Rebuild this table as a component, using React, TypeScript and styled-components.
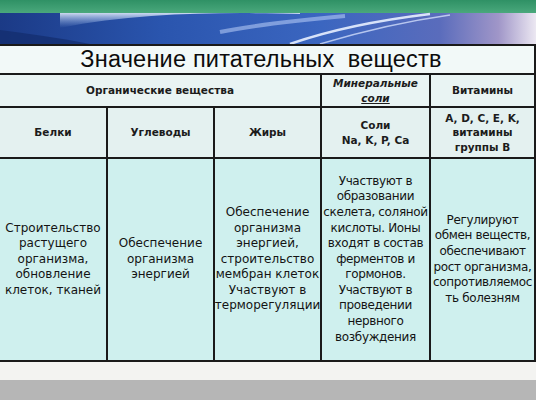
import React from "react"
import styled, { createGlobalStyle } from "styled-components"

type Tone = "title" | "head" | "sub" | "body"

const GlobalStyle = createGlobalStyle`
  html, body {
    margin: 0;
    padding: 0;
    background: #b6b6b6;
  }
  body {
    width: 536px;
    height: 400px;
    overflow: hidden;
    font-family: "DejaVu Sans", "Liberation Sans", sans-serif;
    color: #111;
  }
`

const toneBg: Record<Tone, string> = {
  title: "#f2f9f8",
  head: "#e9f4f3",
  sub: "#e4f1f0",
  body: "#cff0ee",
}

const Banner = () => (
  <S.Banner viewBox="0 0 536 44" width={536} height={44}>
    <defs>
      <linearGradient id="green" x1="0" y1="0" x2="0" y2="1">
        <stop offset="0" stopColor="#2f9165" />
        <stop offset="1" stopColor="#4aa87c" />
      </linearGradient>
      <linearGradient id="blue" x1="0" y1="0" x2="1" y2="0">
        <stop offset="0" stopColor="#1b3a86" />
        <stop offset="0.3" stopColor="#2a55ae" />
        <stop offset="0.6" stopColor="#3b66c0" />
        <stop offset="0.82" stopColor="#5a6cbc" />
        <stop offset="0.93" stopColor="#a096c8" />
        <stop offset="1" stopColor="#ece8f2" />
      </linearGradient>
      <linearGradient id="haze" x1="0" y1="0" x2="0" y2="1">
        <stop offset="0" stopColor="#dfe9f8" stopOpacity="0.9" />
        <stop offset="1" stopColor="#8fb0e6" stopOpacity="0" />
      </linearGradient>
    </defs>
    <rect x="0" y="0" width="536" height="13" fill="url(#green)" />
    <rect x="0" y="13" width="536" height="31" fill="url(#blue)" />
    <path d="M60 28 C 140 12, 230 12, 300 14 L 300 13 L 60 13 Z" fill="url(#haze)" />
    <path d="M0 44 L 0 30 C 30 34, 60 38, 90 44 Z" fill="#132c6c" opacity="0.7" />
    <path d="M290 44 C 330 30, 380 20, 430 14" stroke="#e8f0ff" strokeWidth="2.5" fill="none" opacity="0.9" />
    <path d="M320 44 C 360 32, 400 22, 450 15" stroke="#dbe6ff" strokeWidth="1.5" fill="none" opacity="0.75" />
    <path d="M220 32 C 260 24, 300 20, 345 16" stroke="#c9dbff" strokeWidth="4" fill="none" opacity="0.5" />
  </S.Banner>
)

export default function App() {
  return (
    <S.Page>
      <GlobalStyle />
      <Banner />
      <S.Table>
        <S.Cell $tone="title" $span="1 / -1">
          <S.Title>Значение питательных&nbsp; веществ</S.Title>
        </S.Cell>
        <S.Cell $tone="head" $span="1 / span 3">
          <S.Head>Органические вещества</S.Head>
        </S.Cell>
        <S.Cell $tone="head">
          <S.Head $italic>
            Минеральные
            <br />
            <S.Underline>соли</S.Underline>
          </S.Head>
        </S.Cell>
        <S.Cell $tone="head">
          <S.Head>Витамины</S.Head>
        </S.Cell>

        <S.Cell $tone="sub">
          <S.Head>Белки</S.Head>
        </S.Cell>
        <S.Cell $tone="sub">
          <S.Head>Углеводы</S.Head>
        </S.Cell>
        <S.Cell $tone="sub">
          <S.Head>Жиры</S.Head>
        </S.Cell>
        <S.Cell $tone="sub">
          <S.Head>
            Соли
            <br />
            Na, K, P, Ca
          </S.Head>
        </S.Cell>
        <S.Cell $tone="sub">
          <S.Head>
            A, D, C, E, K,
            <br />
            витамины
            <br />
            группы B
          </S.Head>
        </S.Cell>

        <S.Cell $tone="body">
          <S.Body>
            Строительство<br />растущего<br />организма,<br />обновление<br />клеток, тканей
          </S.Body>
        </S.Cell>
        <S.Cell $tone="body">
          <S.Body>
            Обеспечение<br />организма<br />энергией
          </S.Body>
        </S.Cell>
        <S.Cell $tone="body">
          <S.Body>
            Обеспечение<br />организма<br />энергией,<br />строительство<br />мембран клеток<br />Участвуют в<br />терморегуляции
          </S.Body>
        </S.Cell>
        <S.Cell $tone="body">
          <S.Body $tight>
            Участвуют в<br />образовании<br />скелета, соляной<br />кислоты. Ионы<br />входят в состав<br />ферментов и<br />гормонов.<br />Участвуют в<br />проведении<br />нервного<br />возбуждения
          </S.Body>
        </S.Cell>
        <S.Cell $tone="body">
          <S.Body $tight>
            Регулируют<br />обмен веществ,<br />обеспечивают<br />рост организма,<br />сопротивляемос<br />ть болезням
          </S.Body>
        </S.Cell>
      </S.Table>
      <S.Strip />
    </S.Page>
  )
}

const S = {
  Page: styled.div`
    display: flex;
    flex-direction: column;
    width: 536px;
  `,
  Banner: styled.svg`
    display: block;
  `,
  Table: styled.div`
    display: grid;
    grid-template-columns: 106px 105px 105px 107px 103px;
    grid-template-rows: 27px 31px 49px 201px;
    gap: 2px;
    padding: 2px 2px 2px 0;
    background: #1a1a1a;
  `,
  Cell: styled.div<{ $tone: Tone; $span?: string }>`
    grid-column: ${(p) => p.$span ?? "auto"};
    display: flex;
    align-items: center;
    justify-content: center;
    text-align: center;
    overflow: hidden;
    white-space: nowrap;
    background: ${(p) => toneBg[p.$tone]};
  `,
  Title: styled.div`
    font-family: "Liberation Sans", Arial, sans-serif;
    font-size: 23.5px;
    letter-spacing: 0.2px;
    color: #0c0c0c;
    margin-left: -12px;
  `,
  Head: styled.div<{ $italic?: boolean }>`
    font-size: 10.5px;
    font-weight: bold;
    line-height: 14.5px;
    font-style: ${(p) => (p.$italic ? "italic" : "normal")};
    color: #1c1c1c;
  `,
  Underline: styled.span`
    text-decoration: underline;
  `,
  Body: styled.div<{ $tight?: boolean }>`
    font-size: 12px;
    line-height: 15.6px;
    letter-spacing: ${(p) => (p.$tight ? "-0.35px" : "0")};
    color: #141414;
  `,
  Strip: styled.div`
    height: 18px;
    background: #f3f3f1;
  `,
}
